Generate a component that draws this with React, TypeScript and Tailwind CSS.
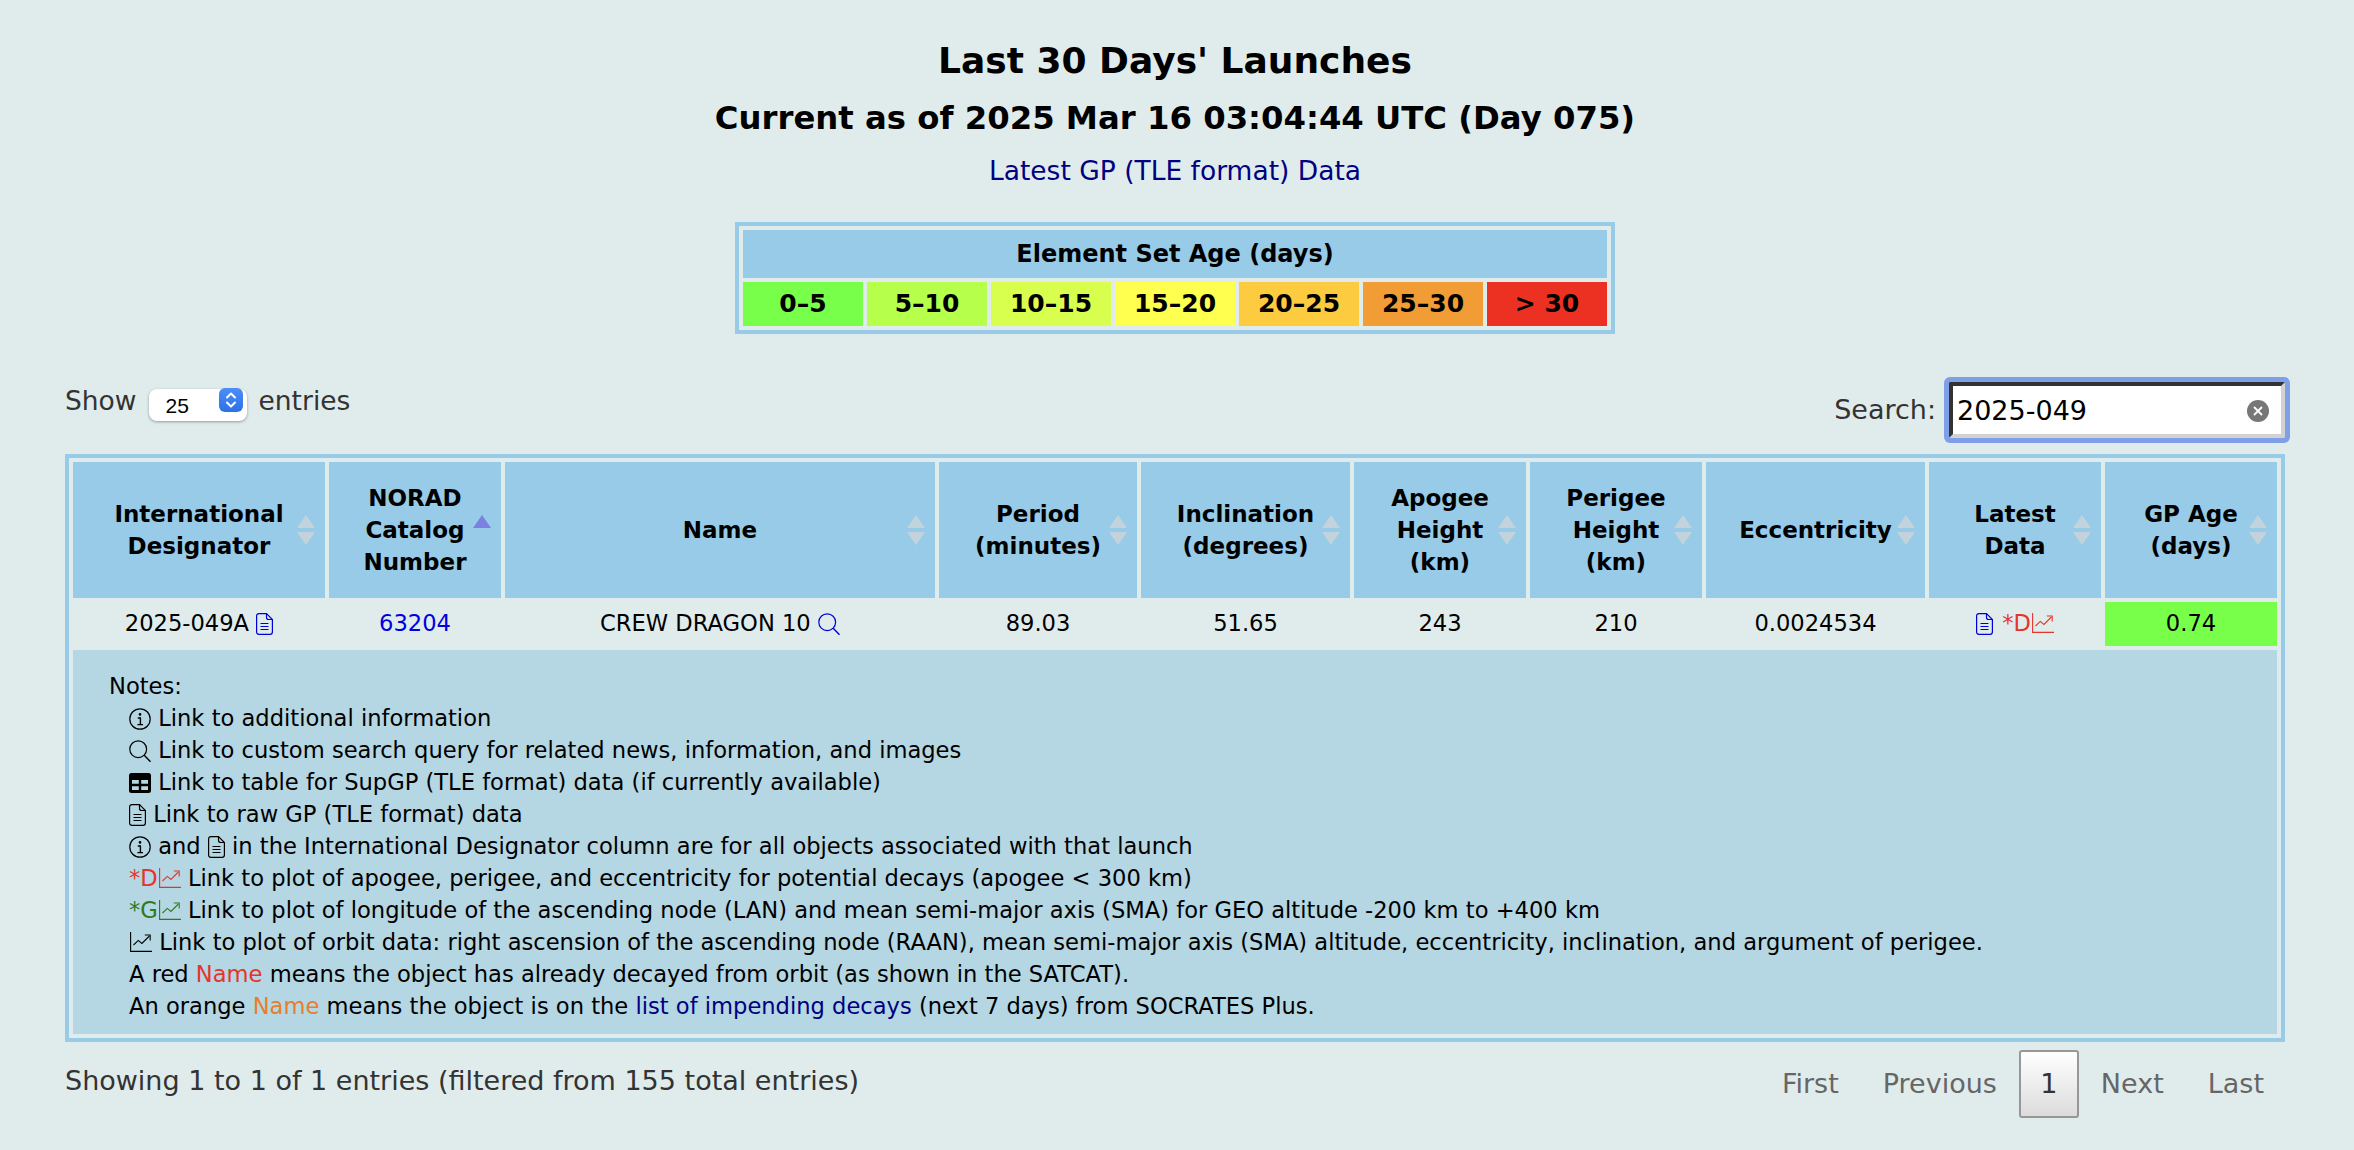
const legend = [
  { label: "0–5", color: "bg-[#78ff4a]" },
  { label: "5–10", color: "bg-[#b6ff4a]" },
  { label: "10–15", color: "bg-[#d8ff4e]" },
  { label: "15–20", color: "bg-[#ffff50]" },
  { label: "20–25", color: "bg-[#fccb40]" },
  { label: "25–30", color: "bg-[#f29c35]" },
  { label: "> 30", color: "bg-[#ec3123]" },
];

const columns = [
  { lines: ["International", "Designator"], width: "w-[252px]" },
  { lines: ["NORAD", "Catalog", "Number"], width: "w-[172px]", active: true },
  { lines: ["Name"], width: "w-[430px]" },
  { lines: ["Period", "(minutes)"], width: "w-[198px]" },
  { lines: ["Inclination", "(degrees)"], width: "w-[209px]" },
  { lines: ["Apogee", "Height", "(km)"], width: "w-[172px]" },
  { lines: ["Perigee", "Height", "(km)"], width: "w-[172px]" },
  { lines: ["Eccentricity"], width: "w-[219px]" },
  { lines: ["Latest", "Data"], width: "w-[172px]" },
  { lines: ["GP Age", "(days)"], width: "w-[172px]" },
];

// Sort arrows sit over the header cell, same as the DataTables background image
const SortIcon = ({ active }: { active?: boolean }) => (
  <span className="absolute right-[10px] top-1/2 flex -translate-y-1/2 flex-col gap-[4px]">
    <span
      className={`h-0 w-0 border-x-[9px] border-b-[13px] border-x-transparent ${
        active ? "border-b-[#7c80e0]" : "border-b-[#c3d3dc]"
      }`}
    />
    <span
      className={`h-0 w-0 border-x-[9px] border-t-[13px] border-x-transparent ${
        active ? "border-t-transparent" : "border-t-[#c3d3dc]"
      }`}
    />
  </span>
);

const DocIcon = () => (
  <svg viewBox="0 0 17 22" className="inline-block h-[22px] w-[17px] align-[-4px]" fill="none" stroke="currentColor" strokeWidth="1.2">
    <path d="M3 .6h7.5l5.9 5.9v12.6a2.3 2.3 0 0 1-2.3 2.3H3a2.3 2.3 0 0 1-2.4-2.3V3A2.3 2.3 0 0 1 3 .6z" />
    <path d="M10.5.6v3.6a2.3 2.3 0 0 0 2.3 2.3h3.6" />
    <path d="M4.5 10.5h8M4.5 13.5h8M4.5 16.5h8" />
  </svg>
);

const InfoIcon = () => (
  <svg viewBox="0 0 22 22" className="inline-block h-[22px] w-[22px] align-[-4px]" fill="none" stroke="currentColor" strokeWidth="1.2">
    <circle cx="11" cy="11" r="10.2" />
    <circle cx="11" cy="6.4" r="1.3" fill="currentColor" stroke="none" />
    <path d="M8.8 10h2.6v6.6M8.4 16.6h5.6" strokeWidth="1.4" />
  </svg>
);

const SearchIcon = () => (
  <svg viewBox="0 0 22 22" className="inline-block h-[22px] w-[22px] align-[-4px]" fill="none" stroke="currentColor" strokeWidth="1.2">
    <circle cx="9.2" cy="9.2" r="8.4" />
    <path d="M15.2 15.2l6.3 6.6" strokeWidth="1.4" />
  </svg>
);

const TableIcon = () => (
  <svg viewBox="0 0 22 20" className="inline-block h-[20px] w-[22px] align-[-3px]" fill="currentColor">
    <path
      fillRule="evenodd"
      d="M2.5 0h17A2.5 2.5 0 0 1 22 2.5v15a2.5 2.5 0 0 1-2.5 2.5h-17A2.5 2.5 0 0 1 0 17.5v-15A2.5 2.5 0 0 1 2.5 0zM3 7v3.8h6.8V7zm9.2 0v3.8H19V7zM3 13.2V17h6.8v-3.8zm9.2 0V17H19v-3.8z"
    />
  </svg>
);

const ChartIcon = () => (
  <svg viewBox="0 0 22 20" className="ml-[1px] inline-block h-[20px] w-[22px] align-[-2px]" fill="none" stroke="currentColor" strokeWidth="1.1">
    <path d="M.6 0v19.4H22" />
    <path d="M3.5 13l4.8-4.6 3.6 3L19.4 4" />
    <path d="M14.8 3h5.4v5.4" />
  </svg>
);

const ClearIcon = () => (
  <svg viewBox="0 0 22 22" className="h-[22px] w-[22px]">
    <circle cx="11" cy="11" r="11" fill="#777" />
    <path d="M7 7l8 8M15 7l-8 8" stroke="#fff" strokeWidth="1.8" />
  </svg>
);

const SelectArrows = () => (
  <svg viewBox="0 0 24 24" className="h-[24px] w-[24px]" fill="none" stroke="#fff" strokeWidth="2" strokeLinecap="round" strokeLinejoin="round">
    <path d="M8 9.5l4-4 4 4M8 14.5l4 4 4-4" />
  </svg>
);

export default function App() {
  return (
    <div className="min-h-[1150px] bg-[#e0ecec] pl-[65px] pr-[69px] pt-[37px] font-['DejaVu_Sans',sans-serif] text-black">
      <h1 className="text-center text-[36px] font-bold leading-[48px]">Last 30 Days' Launches</h1>
      <h2 className="mt-[13px] text-center text-[32.3px] font-bold leading-[40px]">
        Current as of 2025 Mar 16 03:04:44 UTC (Day 075)
      </h2>
      <p className="mt-[17px] text-center text-[26.5px] leading-[32px]">
        <a href="#" className="text-[#000080]">
          Latest GP (TLE format) Data
        </a>
      </p>

      <table className="mx-auto mt-[35px] w-[880px] table-fixed border-separate border-spacing-[4px] border-4 border-[#97cbe8] text-[25px] font-bold">
        <tbody>
          <tr>
            <th colSpan={7} className="h-[48px] bg-[#97cbe8] p-0 text-[24px]">
              Element Set Age (days)
            </th>
          </tr>
          <tr>
            {legend.map((item) => (
              <td key={item.label} className={`h-[44px] p-0 text-center ${item.color}`}>
                {item.label}
              </td>
            ))}
          </tr>
        </tbody>
      </table>

      <div className="mt-[48px] flex h-[58px] justify-between">
        <label className="flex h-[36px] items-center pt-[2px] text-[26.5px] text-[#333]">
          Show
          <span className="relative mx-[12px] -mt-[3px] block h-[32px] w-[98px]">
            <select
              defaultValue="25"
              className="h-full w-full appearance-none rounded-[8px] bg-white pl-[17px] font-['Liberation_Sans',sans-serif] text-[21px] text-black shadow-[0_1px_3px_rgba(0,0,0,0.35)]"
            >
              <option>10</option>
              <option>25</option>
              <option>50</option>
              <option>100</option>
            </select>
            <span className="absolute right-[4px] top-[4px] flex h-[24px] w-[24px] items-center justify-center rounded-[6px] bg-gradient-to-b from-[#4b8ff8] to-[#2d6fe6]">
              <SelectArrows />
            </span>
          </span>
          entries
        </label>
        <label className="flex h-[56px] items-center text-[27px] text-[#333]">
          Search:
          <span className="relative ml-[13px] block h-[56px] w-[336px]">
            <input
              readOnly
              value="2025-049"
              className="h-full w-full rounded-[2px] border-4 border-b-[#d2d2d2] border-l-[#333] border-r-[#d2d2d2] border-t-[#333] bg-white pl-[4px] text-[27px] text-black outline-none ring-[5px] ring-[#7f9fe8]"
            />
            <span className="absolute right-[16px] top-[18px] flex">
              <ClearIcon />
            </span>
          </span>
        </label>
      </div>

      <table className="mt-[14px] w-full table-fixed border-separate border-spacing-[4px] border-4 border-[#97cbe8] text-[22.6px]">
        <colgroup>
          {columns.map((col) => (
            <col key={col.lines[0]} className={col.width} />
          ))}
        </colgroup>
        <thead>
          <tr>
            {columns.map((col) => (
              <th key={col.lines[0]} className="relative h-[136px] bg-[#97cbe8] p-0 text-center text-[23px] font-bold leading-[32px]">
                {col.lines.map((line) => (
                  <div key={line}>{line}</div>
                ))}
                <SortIcon active={col.active} />
              </th>
            ))}
          </tr>
        </thead>
        <tbody>
          <tr className="text-center">
            <td className="h-[44px] p-0">
              2025-049A{" "}
              <span className="text-[#0000d8]">
                <DocIcon />
              </span>
            </td>
            <td className="p-0">
              <a href="#" className="text-[#0000e0]">
                63204
              </a>
            </td>
            <td className="p-0">
              CREW DRAGON 10{" "}
              <span className="text-[#0000d8]">
                <SearchIcon />
              </span>
            </td>
            <td className="p-0">89.03</td>
            <td className="p-0">51.65</td>
            <td className="p-0">243</td>
            <td className="p-0">210</td>
            <td className="p-0">0.0024534</td>
            <td className="p-0">
              <span className="text-[#0000d8]">
                <DocIcon />
              </span>
              <span className="ml-[9px] text-[#e5352b]">
                *D
                <ChartIcon />
              </span>
            </td>
            <td className="bg-[#78ff4a] p-0">0.74</td>
          </tr>
          <tr>
            <td colSpan={10} className="h-[383px] bg-[#b5d6e3] p-0 pb-[12px] pl-[36px] pt-[20px] align-top leading-[32px]">
              <div>Notes:</div>
              <div className="pl-[20px]">
                <div>
                  <InfoIcon /> Link to additional information
                </div>
                <div>
                  <SearchIcon /> Link to custom search query for related news, information, and images
                </div>
                <div>
                  <TableIcon /> Link to table for SupGP (TLE format) data (if currently available)
                </div>
                <div>
                  <DocIcon /> Link to raw GP (TLE format) data
                </div>
                <div>
                  <InfoIcon /> and <DocIcon /> in the International Designator column are for all objects associated with that launch
                </div>
                <div>
                  <span className="text-[#e5352b]">
                    *D
                    <ChartIcon />
                  </span>{" "}
                  Link to plot of apogee, perigee, and eccentricity for potential decays (apogee &lt; 300 km)
                </div>
                <div>
                  <span className="text-[#2e7a1e]">
                    *G
                    <ChartIcon />
                  </span>{" "}
                  Link to plot of longitude of the ascending node (LAN) and mean semi-major axis (SMA) for GEO altitude -200 km to +400 km
                </div>
                <div>
                  <ChartIcon /> Link to plot of orbit data: right ascension of the ascending node (RAAN), mean semi-major axis (SMA) altitude, eccentricity, inclination, and argument of perigee.
                </div>
                <div>
                  A red <span className="text-[#e5352b]">Name</span> means the object has already decayed from orbit (as shown in the SATCAT).
                </div>
                <div>
                  An orange <span className="text-[#e67e2e]">Name</span> means the object is on the{" "}
                  <a href="#" className="text-[#000080]">
                    list of impending decays
                  </a>{" "}
                  (next 7 days) from SOCRATES Plus.
                </div>
              </div>
            </td>
          </tr>
        </tbody>
      </table>

      <div className="flex items-start justify-between text-[27px]">
        <div className="mt-[23px] leading-[32px] text-[#333]">Showing 1 to 1 of 1 entries (filtered from 155 total entries)</div>
        <div className="mt-[8px] flex h-[68px] items-center text-[#666]">
          <span className="px-[22px]">First</span>
          <span className="px-[22px]">Previous</span>
          <span className="flex h-full w-[60px] items-center justify-center rounded-[3px] border-2 border-[#979797] bg-gradient-to-b from-white to-[#dcdcdc] text-[#333]">
            1
          </span>
          <span className="px-[22px]">Next</span>
          <span className="pl-[22px] pr-[21px]">Last</span>
        </div>
      </div>
    </div>
  );
}
